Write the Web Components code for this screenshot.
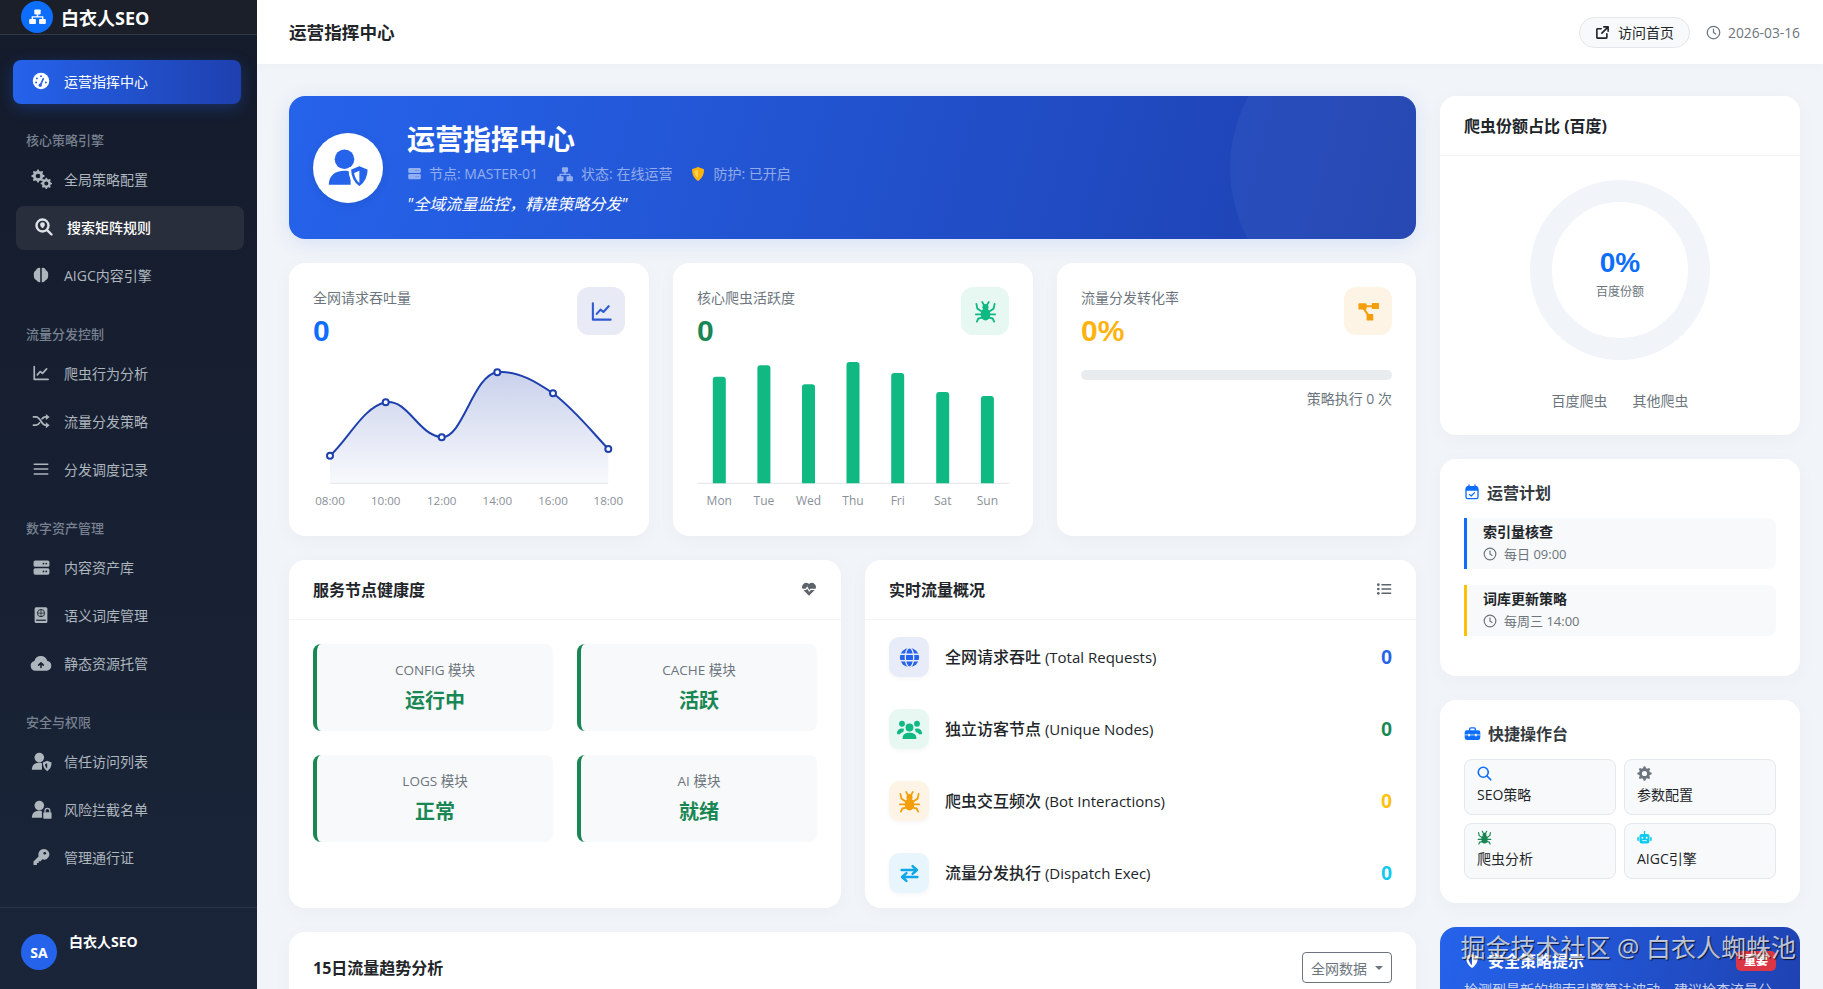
<!DOCTYPE html>
<html lang="zh-CN">
<head>
<meta charset="utf-8">
<title>运营指挥中心</title>
<style>
  html, body { margin: 0; height: 989px; overflow: hidden; }
  body {
    display: flex;
    background: #f1f4f8;
    color: #212529;
    font-family: "Open Sans", "Noto Sans CJK SC", sans-serif;
    font-size: 14px;
  }
  main-area { flex: 1; min-width: 0; }
</style>
</head>
<body>
<app-sidebar>
  <nav-item icon="gauge" active>运营指挥中心</nav-item>
  <nav-label>核心策略引擎</nav-label>
  <nav-item icon="gears" icon-size="21">全局策略配置</nav-item>
  <nav-item icon="searchdot" hover>搜索矩阵规则</nav-item>
  <nav-item icon="brain">AIGC内容引擎</nav-item>
  <nav-label>流量分发控制</nav-label>
  <nav-item icon="chart">爬虫行为分析</nav-item>
  <nav-item icon="shuffle">流量分发策略</nav-item>
  <nav-item icon="bars">分发调度记录</nav-item>
  <nav-label>数字资产管理</nav-label>
  <nav-item icon="server" icon-size="19">内容资产库</nav-item>
  <nav-item icon="atlas">语义词库管理</nav-item>
  <nav-item icon="cloud" icon-size="22">静态资源托管</nav-item>
  <nav-label>安全与权限</nav-label>
  <nav-item icon="usershield" icon-size="21">信任访问列表</nav-item>
  <nav-item icon="userlock" icon-size="21">风险拦截名单</nav-item>
  <nav-item icon="key">管理通行证</nav-item>
</app-sidebar>

<main-area>
  <top-bar></top-bar>
  <dash-grid>
    <hero-banner></hero-banner>
    <stat-row>
      <stat-card label="全网请求吞吐量" value="0" color="#0d6efd" tint="#e8ebf6" icon="chart" icon-color="#2f5bd0"><line-spark></line-spark></stat-card>
      <stat-card label="核心爬虫活跃度" value="0" color="#198754" tint="#e7f7f1" icon="spider" icon-color="#10b981"><bar-spark></bar-spark></stat-card>
      <stat-card label="流量分发转化率" value="0%" color="#ffb30f" tint="#fef4e6" icon="project" icon-color="#f59e0b"><rate-bar></rate-bar></stat-card>
    </stat-row>
    <two-up>
      <panel-card heading="服务节点健康度" icon="heartbeat">
        <health-grid>
          <health-cell label="CONFIG 模块">运行中</health-cell>
          <health-cell label="CACHE 模块">活跃</health-cell>
          <health-cell label="LOGS 模块">正常</health-cell>
          <health-cell label="AI 模块">就绪</health-cell>
        </health-grid>
      </panel-card>
      <panel-card heading="实时流量概况" icon="listul">
        <traffic-list>
          <traffic-row icon="globe" tint="#e8ebf8" icon-color="#2563eb" color="#2563eb" value="0"><b>全网请求吞吐</b> (Total Requests)</traffic-row>
          <traffic-row icon="users" icon-size="25" tint="#e7f8f2" icon-color="#10b981" color="#198754" value="0"><b>独立访客节点</b> (Unique Nodes)</traffic-row>
          <traffic-row icon="spider" icon-size="23" tint="#fef4e6" icon-color="#f59e0b" color="#ffc107" value="0"><b>爬虫交互频次</b> (Bot Interactions)</traffic-row>
          <traffic-row icon="exchange" tint="#e8f5fd" icon-color="#0ea5e9" color="#0dcaf0" value="0"><b>流量分发执行</b> (Dispatch Exec)</traffic-row>
        </traffic-list>
      </panel-card>
    </two-up>
    <trend-card></trend-card>

    <side-column slot="side">
      <share-card></share-card>
      <small-card heading="运营计划" icon="calcheck">
        <plan-item tone="#0d6efd" time="每日 09:00">索引量核查</plan-item>
        <plan-item tone="#ffc107" time="每周三 14:00">词库更新策略</plan-item>
      </small-card>
      <small-card heading="快捷操作台" icon="toolbox" class="quick">
        <quick-grid>
          <quick-btn icon="search" icon-color="#0d6efd">SEO策略</quick-btn>
          <quick-btn icon="cog" icon-color="#6c757d">参数配置</quick-btn>
          <quick-btn icon="spider" icon-color="#198754">爬虫分析</quick-btn>
          <quick-btn icon="robot" icon-color="#0dcaf0">AIGC引擎</quick-btn>
        </quick-grid>
      </small-card>
      <alert-card></alert-card>
    </side-column>
  </dash-grid>
</main-area>
<water-mark>掘金技术社区 @ 白衣人蜘蛛池</water-mark>

<script>
// toothed wheel with a hole, filled evenodd so the page shows through
const gear = (x, y, r, teeth = 8) => {
  const pts = []
  const step = Math.PI * 2 / (teeth * 4)
  for (let i = 0; i < teeth * 4; i++) {
    const rad = i % 4 < 2 ? r : r * 0.76
    const a = (i - 0.5) * step
    pts.push(`${(x + rad * Math.cos(a)).toFixed(2)} ${(y + rad * Math.sin(a)).toFixed(2)}`)
  }
  const h = r * 0.36
  return `<path fill-rule="evenodd" d="M${pts.join('L')}Z M${x - h} ${y}a${h} ${h} 0 1 0 ${h * 2} 0a${h} ${h} 0 1 0 ${-h * 2} 0Z"/>`
}

const cut = 'var(--cut, #fff)'
const line = (d, w = 2) => `<path d="${d}" fill="none" stroke="currentColor" stroke-width="${w}" stroke-linecap="round" stroke-linejoin="round"/>`
const cutLine = (d, w = 2) => `<path d="${d}" fill="none" stroke="${cut}" stroke-width="${w}" stroke-linecap="round" stroke-linejoin="round"/>`

const ICONS = {
  sitemap: `<rect x="8" y="3" width="8" height="6.5" rx="1.2"/><path d="M12 9v3.5M5.5 15.5V12.5h13v3" fill="none" stroke="currentColor" stroke-width="1.8"/><rect x="1.5" y="15" width="8.5" height="6.5" rx="1.2"/><rect x="14" y="15" width="8.5" height="6.5" rx="1.2"/>`,
  gauge: `<circle cx="12" cy="12" r="11"/><circle cx="12" cy="5.5" r="1.3" fill="${cut}"/><circle cx="6.5" cy="8.5" r="1.3" fill="${cut}"/><circle cx="5.5" cy="14" r="1.3" fill="${cut}"/><circle cx="18.5" cy="14" r="1.3" fill="${cut}"/>${cutLine('M11 18l4-9', 2.4)}<circle cx="11" cy="17.5" r="2.2" fill="${cut}"/>`,
  gears: gear(8, 8, 7.5) + gear(17.5, 16.5, 6.5),
  searchdot: `<circle cx="10" cy="10" r="8" fill="none" stroke="currentColor" stroke-width="3.2"/>${line('M16.5 16.5L22 22', 3.2)}<circle cx="10" cy="9" r="3.2"/><rect x="8.8" y="11" width="2.4" height="2.4"/>`,
  brain: `<path d="M11 2.5C7.5 2 6 3.8 5.5 5.5 3 6.5 2 9 2.5 12 2 15 3.5 18 6 19c1 2 3 2.8 5 2.5zM13 2.5c3.5-.5 5 1.3 5.5 3C21 6.5 22 9 21.5 12c.5 3-1 6-3.500 7-1 2-3 2.800-5 2.500z"/>`,
  chart: line('M3 3.5V20.5H21.5', 2.2) + line('M7 14.5l4-4.5 3 2.5 5.5-6', 2.2),
  shuffle: line('M2 6.5h3.5c5.5 0 7 11 12.5 11h1.5M2 17.5h3.5c2 0 3.5-1.3 4.5-3M13.5 9c1.2-1.600 2.500-2.500 4.500-2.500h1.500', 2.4) + `<path d="M18.5 2.5l5 4-5 4zM18.5 13.5l5 4-5 4z"/>`,
  bars: line('M3 5.5h18M3 12h18M3 18.5h18', 2),
  server: `<rect x="2" y="3" width="20" height="8.2" rx="2"/><rect x="2" y="12.8" width="20" height="8.2" rx="2"/><circle cx="18" cy="7" r="1.1" fill="${cut}"/><circle cx="14.5" cy="7" r="1.1" fill="${cut}"/><circle cx="18" cy="17" r="1.1" fill="${cut}"/><circle cx="14.5" cy="17" r="1.1" fill="${cut}"/>`,
  atlas: `<rect x="3.5" y="1.5" width="17" height="21" rx="2"/><circle cx="12" cy="9.5" r="4.8" fill="none" stroke="${cut}" stroke-width="1.2"/><path d="M12 4.7v9.600M7.200 9.500h9.600" stroke="${cut}" stroke-width="1"/><path d="M5.500 19h13" stroke="${cut}" stroke-width="1.6"/>`,
  cloud: `<path d="M6 20.5A5.5 5.5 0 0 1 4.8 9.7 7.3 7.3 0 0 1 18.800 9.500 5.600 5.600 0 0 1 18.500 20.500z"/>${cutLine('M12 17v-5M9.5 14.3L12 11.8l2.5 2.5', 1.7)}`,
  usershield: `<circle cx="9.5" cy="7.5" r="5.5"/><path d="M1 21.5c0-5 3-8 8.5-8 1.2 0 2.300.2 3 .5v7.500z"/><path d="M18.5 11l5 2c0 4.500-1.800 7.800-5 10-3.200-2.200-5-5.500-5-10z"/><path d="M18.500 14v6c-1.500-1.300-2.300-3-2.500-5z" fill="${cut}"/>`,
  userlock: `<circle cx="9.5" cy="7.5" r="5.5"/><path d="M1 21.5c0-5 3-8 8.5-8 1.2 0 2.300.2 3 .5v7.500z"/><rect x="14" y="15" width="9.5" height="7.5" rx="1"/>${line('M16 15v-1.5a2.700 2.700 0 0 1 5.500 0V15', 1.5)}`,
  key: `<path d="M16 1.5a7 7 0 1 1-2.200 13.600L11.500 17.500H9v2.500H6.500v2.500H2v-4.500l7-7A7 7 0 0 1 16 1.500z"/><circle cx="17" cy="7" r="1.8" fill="${cut}"/>`,
  spider: `<ellipse cx="12" cy="15" rx="5" ry="6.5"/><circle cx="12" cy="7.5" r="3.2"/>` + line('M8 12L3.500 9 2.500 4M16 12l4.500-3 1-5M8 15H2M16 15h6M8.500 18.500l-4 .8-1.500 3.200M15.500 18.500l4 .8 1.500 3.200M10.500 5.500L8.500 2M13.500 5.500l2-3.500', 1.9),
  project: `<rect x="1.5" y="3.5" width="8.5" height="6.5" rx="1"/><rect x="15.5" y="3" width="7.5" height="6.5" rx="1"/><rect x="10" y="14.5" width="7" height="7" rx="1"/>` + line('M9 6.500h8M7 9l5 7', 2.2),
  heartbeat: `<path d="M12 22L2.800 12.700A6.300 6.300 0 0 1 11.200 3.700L12 4.500l.8-.8a6.300 6.300 0 0 1 8.400 9z"/><path d="M0 12.500h7.500l1.800-3 3 5.500 2-2.500H24" fill="none" stroke="${cut}" stroke-width="1.7"/>`,
  listul: `<circle cx="3.5" cy="5.5" r="2"/><circle cx="3.5" cy="12" r="2"/><circle cx="3.5" cy="18.5" r="2"/>` + line('M9 5.500h13M9 12h13M9 18.500h13', 2.2),
  globe: `<circle cx="12" cy="12" r="11"/><ellipse cx="12" cy="12" rx="4.8" ry="11" fill="none" stroke="${cut}" stroke-width="1.5"/><path d="M1 8.300h22M1 15.700h22" stroke="${cut}" stroke-width="1.5"/>`,
  users: `<circle cx="12" cy="10" r="3.8"/><circle cx="4.8" cy="6.5" r="2.8"/><circle cx="19.2" cy="6.5" r="2.8"/><path d="M5.500 21v-1.500c0-3 2.500-4.500 6.500-4.500s6.500 1.500 6.500 4.500V21z"/><path d="M0 15.500c0-3 2-4.500 4.800-4.500 1 0 1.700.2 2.300.5-.8 1-1 2-1 3-1.500.5-2.700 1-3.300 2H.8c-.5 0-.8-.5-.8-1zM24 15.500c0-3-2-4.500-4.800-4.500-1 0-1.700.2-2.300.5.8 1 1 2 1 3 1.500.5 2.700 1 3.300 2h2c.5 0 .8-.5.8-1z"/>`,
  exchange: line('M3 8h17M15.500 3.500L20.500 8l-5 4.500M21 16H4M8.500 11.500L3.500 16l5 4.500', 2.8),
  clock: `<circle cx="12" cy="12" r="10" fill="none" stroke="currentColor" stroke-width="2"/>` + line('M12 6.500V12l3.500 2.500', 2),
  external: line('M19 14v6a1 1 0 0 1-1 1H4a1 1 0 0 1-1-1V7a1 1 0 0 1 1-1h6M14 3h7v7M21 3L11 13', 2.6),
  calcheck: `<rect x="3" y="5" width="18" height="17" rx="2.5" fill="none" stroke="currentColor" stroke-width="2"/><path d="M3 5.500a2.500 2.500 0 0 1 2.500-2.500h13A2.500 2.500 0 0 1 21 5.500V10H3z"/>` + line('M7.500 1.500v3M16.500 1.500v3', 2) + line('M8 15.500l2.800 2.500 5-5', 1.8),
  toolbox: `<path d="M8 8V5.500A1.500 1.500 0 0 1 9.500 4h5A1.500 1.500 0 0 1 16 5.500V8" fill="none" stroke="currentColor" stroke-width="2"/><rect x="1" y="7.5" width="22" height="13.5" rx="3"/><path d="M1 14h22" stroke="${cut}" stroke-width="1"/><rect x="6" y="12.5" width="2.5" height="3.5" fill="${cut}"/><rect x="15.5" y="12.5" width="2.5" height="3.5" fill="${cut}"/>`,
  cog: gear(12, 12, 11.5),
  search: `<circle cx="10" cy="10" r="8" fill="none" stroke="currentColor" stroke-width="2.6"/>` + line('M16 16l6 6', 2.8),
  robot: `<rect x="4" y="6.5" width="16" height="15" rx="3.5"/><rect x="0.5" y="11" width="2.5" height="6.5" rx="1"/><rect x="21" y="11" width="2.5" height="6.5" rx="1"/><circle cx="12" cy="3" r="1.5"/><path d="M12 3v4" stroke="currentColor" stroke-width="1.6"/><circle cx="8.5" cy="12.5" r="1.6" fill="${cut}"/><circle cx="15.5" cy="12.5" r="1.6" fill="${cut}"/><path d="M8.500 17h7" stroke="${cut}" stroke-width="1.4"/>`,
  shield: `<path d="M12 1.500L21 5c0 8-3 14-9 17.500C6 19 3 13 3 5z"/><path d="M12 5.500v13c-3.500-2.800-5-6.500-5.300-11z" fill="${cut}"/>`,
  user: `<circle cx="10" cy="7" r="5.6"/><path d="M1 21.500c0-5 3.500-8 9-8 1.400 0 2.500.2 3.500.5v7.500z"/><path d="M18.500 10.200l5.500 2.200c0 5-2 8.600-5.500 11-3.500-2.400-5.500-6-5.500-11z" stroke="#fff" stroke-width="1.5"/><path d="M18.500 13.500v7c-1.700-1.500-2.700-3.300-3-5.700z" fill="#fff"/>`
}

class ShadowEl extends HTMLElement {
  constructor() {
    super()
    this.attachShadow({ mode: 'open' })
  }

  connectedCallback() {
    this.shadowRoot.innerHTML = this.markup()
  }

  attr(name, fallback = '') {
    return this.getAttribute(name) ?? fallback
  }
}

class UiIcon extends ShadowEl {
  markup() {
    const size = this.attr('size', '16')
    return `
      <style>
        :host { display: inline-flex; flex: none; width: ${size}px; height: ${size}px; }
        svg { width: 100%; height: 100%; fill: currentColor; display: block; }
      </style>
      <svg viewBox="0 0 24 24">${ICONS[this.attr('name')] || ''}</svg>
    `
  }
}

class AppSidebar extends ShadowEl {
  markup() {
    return `
      <style>
        :host {
          display: flex;
          flex-direction: column;
          flex: none;
          width: 257px;
          height: 989px;
          background: linear-gradient(180deg, #141b2b 0%, #1a2539 100%);
          color: #fff;
        }
        .brand {
          height: 35px;
          box-sizing: border-box;
          padding: 0 0 1px 21px;
          display: flex;
          align-items: center;
          gap: 8px;
          background: #1a1f29;
          border-bottom: 1px solid #333945;
          font-size: 18px;
          font-weight: 700;
        }
        .logo {
          width: 32px;
          height: 32px;
          border-radius: 50%;
          background: #0d6efd;
          display: flex;
          align-items: center;
          justify-content: center;
        }
        nav { flex: 1; padding: 25px 16px 0 13px; display: flex; flex-direction: column; }
        .foot {
          height: 82px;
          border-top: 1px solid #2a3445;
          display: flex;
          gap: 12px;
          padding: 26px 0 0 21px;
          box-sizing: border-box;
        }
        .avatar {
          width: 36px;
          height: 36px;
          border-radius: 50%;
          background: #2563eb;
          font-weight: 700;
          font-size: 14px;
          display: flex;
          align-items: center;
          justify-content: center;
        }
        .name { font-size: 14px; font-weight: 700; line-height: 20px; margin-top: -2px; }
      </style>
      <div class="brand">
        <span class="logo"><ui-icon name="sitemap" size="19"></ui-icon></span>
        白衣人SEO
      </div>
      <nav><slot></slot></nav>
      <div class="foot">
        <span class="avatar">SA</span>
        <span class="name">白衣人SEO</span>
      </div>
    `
  }
}

class NavItem extends ShadowEl {
  markup() {
    const active = this.hasAttribute('active')
    const hover = this.hasAttribute('hover')
    return `
      <style>
        :host {
          display: flex;
          align-items: center;
          flex: none;
          gap: 14px;
          box-sizing: border-box;
          height: 44px;
          margin-bottom: 4px;
          padding: 0 0 2px 19px;
          border-radius: 8px;
          font-size: 14px;
          color: ${active || hover ? '#fff' : '#adb5bd'};
          --cut: ${active ? '#2f64e0' : hover ? '#282e3c' : '#17202f'};
          ${active ? 'background: linear-gradient(90deg, #2563eb, #1e40af); box-shadow: 0 4px 15px rgba(37, 99, 235, .3);' : ''}
          ${hover ? 'background: #282e3c; transform: translateX(3px); font-weight: 500;' : ''}
        }
        .ic { width: 18px; display: flex; justify-content: center; }
        ui-icon { color: ${hover ? '#dfe3e8' : active ? '#fff' : '#adb5bd'}; }
      </style>
      <span class="ic"><ui-icon name="${this.attr('icon')}" size="${this.attr('icon-size', '18')}"></ui-icon></span>
      <slot></slot>
    `
  }
}

class NavLabel extends ShadowEl {
  markup() {
    return `
      <style>
        :host {
          display: block;
          flex: none;
          margin: 23px 0 9px 13px;
          font-size: 13px;
          line-height: 18px;
          font-weight: 500;
          color: #778190;
        }
      </style>
      <slot></slot>
    `
  }
}

class MainArea extends ShadowEl {
  markup() {
    return `
      <style>
        :host { display: flex; flex-direction: column; height: 989px; overflow: hidden; }
      </style>
      <slot></slot>
    `
  }
}

class TopBar extends ShadowEl {
  markup() {
    return `
      <style>
        :host {
          display: flex;
          flex: none;
          align-items: center;
          height: 64px;
          padding: 0 23px 0 32px;
          background: #fff;
          box-shadow: 0 2px 10px rgba(0, 0, 0, .02);
          position: relative;
        }
        h1 { margin: 0 0 2px; flex: 1; font-size: 17.6px; font-weight: 700; }
        .visit {
          display: flex;
          align-items: center;
          gap: 8px;
          box-sizing: border-box;
          width: 111px;
          height: 31px;
          padding-left: 15px;
          margin-right: 16px;
          border: 1px solid #e3e6ea;
          border-radius: 16px;
          background: #f8f9fa;
          font-size: 14px;
          color: #212529;
        }
        .date { display: flex; align-items: center; gap: 7px; font-size: 13.8px; color: #6c757d; }
      </style>
      <h1>运营指挥中心</h1>
      <span class="visit"><ui-icon name="external" size="15"></ui-icon>访问首页</span>
      <span class="date"><ui-icon name="clock" size="15"></ui-icon>2026-03-16</span>
    `
  }
}

class DashGrid extends ShadowEl {
  markup() {
    return `
      <style>
        :host {
          display: grid;
          grid-template-columns: 1127px 360px;
          gap: 24px;
          padding: 32px 23px 0 32px;
          align-items: start;
        }
        .left { display: flex; flex-direction: column; gap: 24px; min-width: 0; }
      </style>
      <div class="left"><slot></slot></div>
      <slot name="side"></slot>
    `
  }
}

class HeroBanner extends ShadowEl {
  markup() {
    return `
      <style>
        :host {
          display: flex;
          align-items: center;
          gap: 24px;
          height: 143px;
          box-sizing: border-box;
          padding: 0 24px;
          border-radius: 16px;
          background: linear-gradient(105deg, #2563eb 0%, #1e40af 100%);
          color: #fff;
          position: relative;
          overflow: hidden;
          box-shadow: 0 4px 20px rgba(37, 99, 235, .12);
        }
        :host::after {
          content: "";
          position: absolute;
          width: 300px;
          height: 300px;
          left: 941px;
          top: -78px;
          border-radius: 50%;
          background: rgba(255, 255, 255, .045);
        }
        .avatar {
          flex: none;
          width: 70px;
          height: 70px;
          border-radius: 50%;
          background: #fff;
          color: #2563eb;
          display: flex;
          align-items: center;
          justify-content: center;
          box-shadow: 0 2px 8px rgba(0, 0, 0, .08);
        }
        .copy { margin-top: -2px; }
        h2 { margin: 0; font-size: 28px; line-height: 40px; font-weight: 700; }
        .meta { display: flex; gap: 18px; margin-top: 5px; font-size: 14px; line-height: 20px; color: rgba(255, 255, 255, .5); }
        .meta span { display: flex; align-items: center; gap: 7px; }
        .quote { margin-top: 9px; font-size: 16px; line-height: 22px; font-style: italic; font-weight: 400; }
        .amber { color: #ffb30f; --cut: #fcd34d; }
      </style>
      <div class="avatar"><ui-icon name="user" size="42"></ui-icon></div>
      <div class="copy">
        <h2>运营指挥中心</h2>
        <div class="meta">
          <span><ui-icon name="server" size="15" style="--cut:#5d88e8"></ui-icon>节点: MASTER-01</span>
          <span><ui-icon name="sitemap" size="18"></ui-icon>状态: 在线运营</span>
          <span><ui-icon class="amber" name="shield" size="16"></ui-icon>防护: 已开启</span>
        </div>
        <div class="quote">"全域流量监控，精准策略分发"</div>
      </div>
    `
  }
}

class StatRow extends ShadowEl {
  markup() {
    return `
      <style>
        :host { display: grid; grid-template-columns: 360px 360px 359px; gap: 24px; height: 273px; }
      </style>
      <slot></slot>
    `
  }
}

class StatCard extends ShadowEl {
  markup() {
    return `
      <style>
        :host {
          display: block;
          padding: 24px;
          border-radius: 16px;
          background: #fff;
          box-shadow: 0 4px 20px rgba(0, 0, 0, .03);
          min-width: 0;
        }
        .head { display: flex; justify-content: space-between; height: 48px; }
        .label { font-size: 14px; line-height: 22px; color: #6c757d; }
        .value { font-family: "Liberation Sans", sans-serif; font-size: 30px; line-height: 40px; font-weight: 700; color: ${this.attr('color')}; margin-top: 2px; }
        .icon {
          width: 48px;
          height: 48px;
          border-radius: 12px;
          background: ${this.attr('tint')};
          color: ${this.attr('icon-color')};
          display: flex;
          align-items: center;
          justify-content: center;
        }
      </style>
      <div class="head">
        <div>
          <div class="label">${this.attr('label')}</div>
          <div class="value">${this.attr('value')}</div>
        </div>
        <div class="icon"><ui-icon name="${this.attr('icon')}" size="23"></ui-icon></div>
      </div>
      <slot></slot>
    `
  }
}

class LineSpark extends ShadowEl {
  markup() {
    const pts = [[17, 110.7], [72.7, 57.3], [128.7, 92.3], [184.3, 27.3], [240, 48.3], [295.3, 104]]
    const curve = 'M17 110.7C35 95 50 62 72.7 57.3C95 54 105 90 128.7 92.3C150 93 160 30 184.3 27.3C205 25 225 38 240 48.3C262 65 280 88 295.3 104'
    const labels = ['08:00', '10:00', '12:00', '14:00', '16:00', '18:00']
    return `
      <style>
        :host { display: block; margin-top: 10px; }
        svg { display: block; width: 312px; height: 167px; overflow: visible; }
        text { font-size: 11.6px; fill: #8a9099; text-anchor: middle; }
      </style>
      <svg viewBox="0 0 312 167">
        <defs>
          <linearGradient id="fade" x1="0" y1="0" x2="0" y2="1">
            <stop offset="0" stop-color="#1e40af" stop-opacity=".24"/>
            <stop offset="1" stop-color="#1e40af" stop-opacity=".03"/>
          </linearGradient>
        </defs>
        <path d="${curve}L295.3 138.3L17 138.3Z" fill="url(#fade)"/>
        <path d="M17 138.3H295.3" stroke="#e3e6ea"/>
        <path d="${curve}" fill="none" stroke="#1e40af" stroke-width="2"/>
        ${pts.map(p => `<circle cx="${p[0]}" cy="${p[1]}" r="3" fill="#fff" stroke="#1e40af" stroke-width="2"/>`).join('')}
        ${labels.map((l, i) => `<text x="${pts[i][0]}" y="160">${l}</text>`).join('')}
      </svg>
    `
  }
}

class BarSpark extends ShadowEl {
  markup() {
    const xs = [22.3, 66.9, 111.5, 156, 200.7, 245.7, 290.4]
    const tops = [31.7, 20.3, 39.3, 17, 28, 47, 51]
    const days = ['Mon', 'Tue', 'Wed', 'Thu', 'Fri', 'Sat', 'Sun']
    return `
      <style>
        :host { display: block; margin-top: 10px; }
        svg { display: block; width: 312px; height: 167px; }
        text { font-size: 12px; fill: #8a9099; text-anchor: middle; }
      </style>
      <svg viewBox="0 0 312 167">
        <path d="M0 138.3H312" stroke="#e3e6ea"/>
        ${xs.map((x, i) => `<path d="M${x - 6.5} 138.3V${tops[i] + 3}a3 3 0 0 1 3-3h7a3 3 0 0 1 3 3V138.3z" fill="#10b981"/>`).join('')}
        ${days.map((d, i) => `<text x="${xs[i]}" y="160">${d}</text>`).join('')}
      </svg>
    `
  }
}

class RateBar extends ShadowEl {
  markup() {
    return `
      <style>
        :host { display: block; margin-top: 35px; }
        .track { height: 10px; border-radius: 5px; background: #e9ecef; }
        .note { margin-top: 9px; text-align: right; font-size: 14px; line-height: 20px; color: #6c757d; }
      </style>
      <div class="track"></div>
      <div class="note">策略执行 0 次</div>
    `
  }
}

class TwoUp extends ShadowEl {
  markup() {
    return `
      <style>
        :host { display: grid; grid-template-columns: 552px 551px; gap: 24px; height: 348px; }
      </style>
      <slot></slot>
    `
  }
}

class PanelCard extends ShadowEl {
  markup() {
    return `
      <style>
        :host {
          display: block;
          border-radius: 16px;
          background: #fff;
          box-shadow: 0 4px 20px rgba(0, 0, 0, .03);
          overflow: hidden;
        }
        header {
          display: flex;
          align-items: center;
          justify-content: space-between;
          height: 60px;
          box-sizing: border-box;
          padding: 0 24px 2px;
          border-bottom: 1px solid #f1f3f5;
          font-size: 16px;
          font-weight: 700;
          color: #212529;
        }
        ui-icon { color: #5c636a; }
      </style>
      <header>${this.attr('heading')}<ui-icon name="${this.attr('icon')}" size="16"></ui-icon></header>
      <slot></slot>
    `
  }
}

class HealthGrid extends ShadowEl {
  markup() {
    return `
      <style>
        :host {
          display: grid;
          grid-template-columns: 240px 240px;
          grid-auto-rows: 87px;
          gap: 24px;
          padding: 24px;
        }
      </style>
      <slot></slot>
    `
  }
}

class HealthCell extends ShadowEl {
  markup() {
    return `
      <style>
        :host {
          display: flex;
          flex-direction: column;
          align-items: center;
          justify-content: center;
          border-left: 4px solid #198754;
          border-radius: 8px;
          background: #f8f9fa;
        }
        .label { font-size: 13.5px; line-height: 20px; color: #6c757d; margin-top: -2px; }
        .state { font-size: 20px; line-height: 30px; font-weight: 700; color: #198754; margin-top: 6px; margin-bottom: -2px; }
      </style>
      <div class="label">${this.attr('label')}</div>
      <div class="state"><slot></slot></div>
    `
  }
}

class TrafficList extends ShadowEl {
  markup() {
    return `
      <style>
        :host { display: block; padding: 1px 24px 0; }
      </style>
      <slot></slot>
    `
  }
}

class TrafficRow extends ShadowEl {
  markup() {
    return `
      <style>
        :host { display: flex; align-items: center; height: 72px; gap: 16px; }
        .icon {
          width: 40px;
          height: 40px;
          border-radius: 10px;
          background: ${this.attr('tint')};
          color: ${this.attr('icon-color')};
          --cut: ${this.attr('tint')};
          display: flex;
          align-items: center;
          justify-content: center;
          box-shadow: 0 2px 4px rgba(0, 0, 0, .04);
        }
        .text { flex: 1; font-size: 15px; font-weight: 500; color: #212529; padding-bottom: 3px; }
        ::slotted(b) { font-size: 16px; font-weight: 500; }
        .value { font-family: "Liberation Sans", sans-serif; font-size: 20px; font-weight: 700; color: ${this.attr('color')}; }
      </style>
      <div class="icon"><ui-icon name="${this.attr('icon')}" size="${this.attr('icon-size', '21')}"></ui-icon></div>
      <div class="text"><slot></slot></div>
      <div class="value">${this.attr('value')}</div>
    `
  }
}

class TrendCard extends ShadowEl {
  markup() {
    return `
      <style>
        :host {
          display: flex;
          justify-content: space-between;
          align-items: center;
          height: 120px;
          box-sizing: border-box;
          padding: 20px 24px 69px;
          border-radius: 16px;
          background: #fff;
          box-shadow: 0 4px 20px rgba(0, 0, 0, .03);
          font-size: 16px;
          font-weight: 700;
        }
        .title { margin-top: -2px; }
        .select {
          display: flex;
          align-items: center;
          gap: 8px;
          height: 31px;
          box-sizing: border-box;
          padding: 0 8px;
          border: 1px solid #6c757d;
          border-radius: 4px;
          font-size: 14px;
          font-weight: 400;
          color: #6c757d;
        }
        .caret { border: 4px solid transparent; border-top-color: #6c757d; border-bottom: 0; }
      </style>
      <span class="title">15日流量趋势分析</span>
      <span class="select">全网数据<i class="caret"></i></span>
    `
  }
}

class SideColumn extends ShadowEl {
  markup() {
    return `
      <style>
        :host { display: flex; flex-direction: column; gap: 24px; }
      </style>
      <slot></slot>
    `
  }
}

class ShareCard extends ShadowEl {
  markup() {
    return `
      <style>
        :host {
          display: block;
          height: 339px;
          border-radius: 16px;
          background: #fff;
          box-shadow: 0 4px 20px rgba(0, 0, 0, .03);
        }
        header {
          height: 60px;
          box-sizing: border-box;
          display: flex;
          align-items: center;
          padding: 0 24px 2px;
          border-bottom: 1px solid #f1f3f5;
          font-size: 16px;
          font-weight: 700;
        }
        .ring {
          width: 180px;
          height: 180px;
          box-sizing: border-box;
          margin: 24px auto 0;
          border: 22px solid #f1f4f8;
          border-radius: 50%;
          display: flex;
          flex-direction: column;
          align-items: center;
          justify-content: center;
        }
        .pct { font-family: "Liberation Sans", sans-serif; font-size: 28px; line-height: 32px; font-weight: 700; color: #0d6efd; margin-top: 8px; }
        .sub { font-size: 12px; line-height: 20px; color: #6c757d; margin-top: 3px; }
        .legend { display: flex; justify-content: center; gap: 25px; margin-top: 31px; font-size: 14px; line-height: 20px; color: #6c757d; }
      </style>
      <header>爬虫份额占比 (百度)</header>
      <div class="ring">
        <div class="pct">0%</div>
        <div class="sub">百度份额</div>
      </div>
      <div class="legend"><span>百度爬虫</span><span>其他爬虫</span></div>
    `
  }
}

class SmallCard extends ShadowEl {
  markup() {
    const quick = this.classList.contains('quick')
    return `
      <style>
        :host {
          display: block;
          box-sizing: border-box;
          padding: 24px;
          border-radius: 16px;
          background: #fff;
          box-shadow: 0 4px 20px rgba(0, 0, 0, .03);
          height: ${quick ? 203 : 217}px;
        }
        h3 {
          display: flex;
          align-items: center;
          gap: 7px;
          margin: -1px 0 16px;
          height: 20px;
          font-size: 16px;
          font-weight: 700;
          color: #343a40;
        }
        ui-icon { color: #0d6efd; --cut: #fff; }
      </style>
      <h3><ui-icon name="${this.attr('icon')}" size="${quick ? 17 : 16}"></ui-icon>${this.attr('heading')}</h3>
      <slot></slot>
    `
  }
}

class PlanItem extends ShadowEl {
  markup() {
    return `
      <style>
        :host {
          display: block;
          box-sizing: border-box;
          height: 51px;
          margin-bottom: 16px;
          padding: 4px 0 0 16px;
          border-left: 3px solid ${this.attr('tone')};
          border-radius: 0 8px 8px 0;
          background: #f8f9fa;
        }
        .title { font-size: 14px; line-height: 20px; font-weight: 700; color: #212529; }
        .time { display: flex; align-items: center; gap: 7px; font-size: 13px; line-height: 20px; color: #6c757d; margin-top: 2px; }
      </style>
      <div class="title"><slot></slot></div>
      <div class="time"><ui-icon name="clock" size="14"></ui-icon>${this.attr('time')}</div>
    `
  }
}

class QuickGrid extends ShadowEl {
  markup() {
    return `
      <style>
        :host { display: grid; grid-template-columns: 1fr 1fr; grid-auto-rows: 56px; gap: 8px; }
      </style>
      <slot></slot>
    `
  }
}

class QuickBtn extends ShadowEl {
  markup() {
    return `
      <style>
        :host {
          display: flex;
          flex-direction: column;
          box-sizing: border-box;
          padding: 6px 12px 0;
          gap: 4px;
          border: 1px solid #e4e7eb;
          border-radius: 8px;
          background: #f8f9fa;
          font-size: 14px;
          line-height: 20px;
          color: #212529;
        }
        ui-icon { color: ${this.attr('icon-color')}; --cut: #f8f9fa; }
      </style>
      <ui-icon name="${this.attr('icon')}" size="15"></ui-icon>
      <span><slot></slot></span>
    `
  }
}

class AlertCard extends ShadowEl {
  markup() {
    return `
      <style>
        :host {
          display: block;
          box-sizing: border-box;
          height: 160px;
          padding: 23px 24px;
          border-radius: 16px;
          background: linear-gradient(105deg, #2563eb, #1e40af);
          color: #fff;
        }
        .row { display: flex; align-items: center; gap: 8px; height: 22px; font-size: 16px; font-weight: 700; }
        .row span { flex: 1; margin-top: -2px; }
        .tag { flex: none; width: 40px; text-align: center; background: #dc3545; border-radius: 5px; font-size: 12px; line-height: 20px; }
        p { margin: 7px 0 0; font-size: 14px; line-height: 22px; color: rgba(255, 255, 255, .75); }
      </style>
      <div class="row">
        <ui-icon name="shield" size="16" style="--cut:#2a5bd6"></ui-icon>
        <span>安全策略提示</span>
        <b class="tag">重要</b>
      </div>
      <p>检测到最新的搜索引擎算法波动，建议检查流量分发策略配置。</p>
    `
  }
}

class WaterMark extends ShadowEl {
  markup() {
    return `
      <style>
        :host {
          position: absolute;
          right: 27px;
          top: 929px;
          font-size: 25px;
          line-height: 36px;
          color: rgba(255, 255, 255, .72);
          text-shadow: 1px 1px 1px rgba(0, 0, 0, .75);
          white-space: nowrap;
        }
      </style>
      <slot></slot>
    `
  }
}

const tags = {
  'ui-icon': UiIcon, 'app-sidebar': AppSidebar, 'nav-item': NavItem, 'nav-label': NavLabel,
  'main-area': MainArea, 'top-bar': TopBar, 'dash-grid': DashGrid, 'hero-banner': HeroBanner,
  'stat-row': StatRow, 'stat-card': StatCard, 'line-spark': LineSpark, 'bar-spark': BarSpark,
  'rate-bar': RateBar, 'two-up': TwoUp, 'panel-card': PanelCard, 'health-grid': HealthGrid,
  'health-cell': HealthCell, 'traffic-list': TrafficList, 'traffic-row': TrafficRow,
  'trend-card': TrendCard, 'side-column': SideColumn, 'share-card': ShareCard,
  'small-card': SmallCard, 'plan-item': PlanItem, 'quick-grid': QuickGrid, 'quick-btn': QuickBtn,
  'alert-card': AlertCard, 'water-mark': WaterMark
}
Object.keys(tags).forEach(name => customElements.define(name, tags[name]))
</script>
</body>
</html>
